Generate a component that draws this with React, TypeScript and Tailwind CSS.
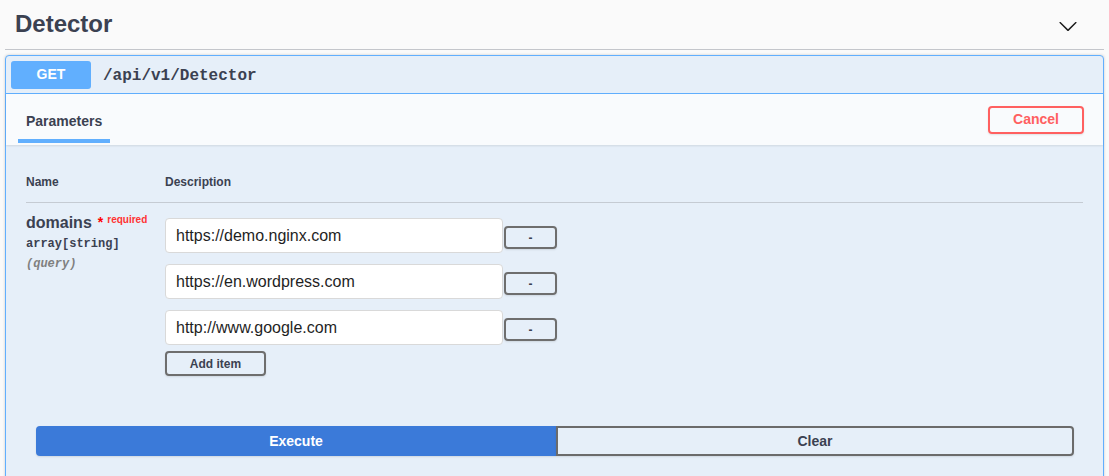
import React from "react";

const sans = { fontFamily: '"Liberation Sans", Arial, sans-serif' };
const mono = { fontFamily: '"Liberation Mono", "Courier New", monospace' };

export default function App() {
  const items = ["https://demo.nginx.com", "https://en.wordpress.com", "http://www.google.com"];
  return (
    <div className="w-[1109px] h-[476px] overflow-hidden bg-[#fafafa] text-[#3b4151]" style={sans}>
      {/* tag header */}
      <div className="mx-[5px] h-[50px] border-b border-[#c4c6cb] flex items-center justify-between pl-[10px] pr-[26px]">
        <h3 className="text-[24px] leading-[29px] font-bold text-[#3b4151] mb-[2px]">Detector</h3>
        <svg width="20" height="20" viewBox="0 0 20 20" className="mt-[2px]">
          <path
            fill="#1a1a1a"
            d="M17.418 6.109c.272-.268.709-.268.979 0s.271.701 0 .969l-7.908 7.83c-.27.268-.707.268-.979 0l-7.908-7.83c-.27-.268-.27-.701 0-.969.271-.268.709-.268.979 0L10 13.25l7.418-7.141z"
          />
        </svg>
      </div>

      {/* opblock */}
      <div className="mx-[5px] mt-[5px] border border-[#61affe] rounded-[4px] bg-[#e6eff9] shadow-[0_0_3px_rgba(0,0,0,0.19)]">
        <div className="h-[38px] px-[5px] flex items-center border-b border-[#61affe]">
          <span className="w-[80px] h-[28px] rounded-[3px] bg-[#61affe] text-white text-[14px] font-bold flex items-center justify-center">
            GET
          </span>
          <span className="ml-[12px] mt-[2px] text-[16px] font-bold text-[#3b4151]" style={mono}>
            /api/v1/Detector
          </span>
        </div>

        {/* section header */}
        <div className="h-[51px] bg-[#f9fbfd] shadow-[0_1px_2px_rgba(0,0,0,0.1)] flex items-center justify-between pl-[12px] pr-[19px]">
          <div className="self-stretch flex flex-col justify-end pb-[2px]">
            <div className="px-[8px] pb-[9px] border-b-4 border-[#61affe] text-[14px] leading-[17px] font-bold">
              Parameters
            </div>
          </div>
          <button className="w-[96px] h-[28px] rounded-[4px] border-2 border-[#ff6060] text-[#ff6060] text-[14px] font-bold bg-transparent shadow-[0_1px_2px_rgba(0,0,0,0.1)]">
            Cancel
          </button>
        </div>

        {/* parameters table */}
        <div className="px-[20px] pt-[30px]">
          <div className="flex border-b border-[#c5cbd3] pb-[12px] text-[12px] leading-[15px] font-bold">
            <div className="w-[139px]">Name</div>
            <div>Description</div>
          </div>
          <div className="flex">
            <div className="w-[139px] pt-[10px]">
              <div className="text-[16px] leading-[19px] font-bold flex items-start">
                <span>domains</span>
                <span className="ml-[6px] text-[#ff0000] text-[14px] leading-[19px]">*</span>
                <span className="ml-[4px] text-[#ff3333] text-[10px] leading-[10px] font-bold mt-[2px]">required</span>
              </div>
              <div className="py-[5px] text-[12px] leading-[15px] font-bold text-[#3b4151]" style={mono}>
                array[string]
              </div>
              <div className="text-[12px] leading-[15px] italic font-bold text-[#808080]" style={mono}>
                (query)
              </div>
            </div>
            <div className="pt-[15px] flex flex-col">
              <div className="flex flex-col gap-[11px]">
                {items.map((v) => (
                  <div key={v} className="flex items-start">
                    <div className="w-[338px] h-[35px] bg-white border border-[#d9d9d9] rounded-[4px] pl-[10px] flex items-center text-[16px] text-[#1f1f1f]">
                      {v}
                    </div>
                    <button className="ml-[1px] mt-[8px] w-[53px] h-[23px] border-2 border-[#6e6e6e] rounded-[4px] text-[12px] font-bold leading-none flex items-center justify-center text-[#3b4151] shadow-[0_1px_2px_rgba(0,0,0,0.1)]">
                      -
                    </button>
                  </div>
                ))}
              </div>
              <button className="mt-[6px] w-[101px] h-[25px] border-2 border-[#6e6e6e] rounded-[4px] text-[12px] font-bold text-[#3b4151] flex items-center justify-center shadow-[0_1px_2px_rgba(0,0,0,0.1)]">
                Add item
              </button>
            </div>
          </div>
        </div>

        {/* execute */}
        <div className="flex pl-[30px] pr-[29px] pt-[50px] pb-[30px]">
          <button className="w-[520px] shrink-0 h-[30px] bg-[#3b7ad9] text-white text-[14px] font-bold rounded-l-[4px] shadow-[0_1px_2px_rgba(0,0,0,0.1)]">
            Execute
          </button>
          <button className="flex-1 h-[30px] border-2 border-[#6b6b6b] rounded-r-[4px] text-[14px] font-bold text-[#3b4151] shadow-[0_1px_2px_rgba(0,0,0,0.1)]">
            Clear
          </button>
        </div>
      </div>
    </div>
  );
}
